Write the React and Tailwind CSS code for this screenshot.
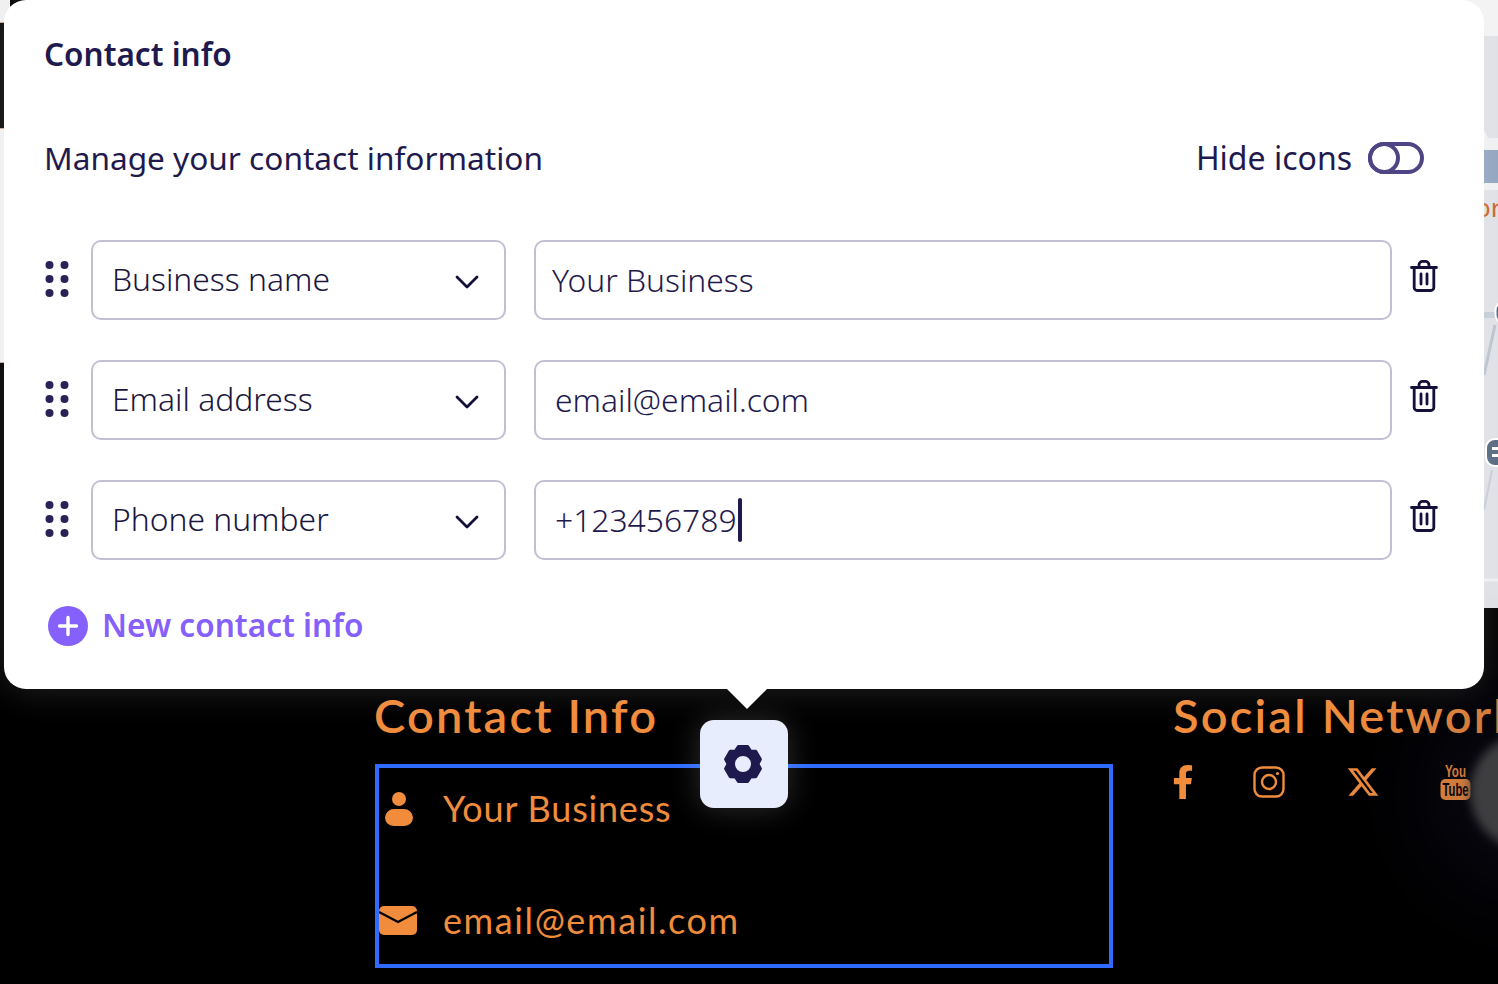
import { Fragment } from "react";
import { FaFacebookF } from "react-icons/fa";
import { FaXTwitter } from "react-icons/fa6";

const rows = [
  { label: "Business name", value: "Your Business", inset: "pl-[16px]" },
  { label: "Email address", value: "email@email.com", inset: "pl-[19px]" },
  { label: "Phone number", value: "+123456789", inset: "pl-[19px]", caret: true },
];

// six tooth gear, points worked out once
function gearPath() {
  const pts = [];
  for (let i = 0; i < 6; i++) {
    const a = (i * Math.PI) / 3 - Math.PI / 2;
    const at = (d, r) => [20 + r * Math.cos(a + d), 20 + r * Math.sin(a + d)];
    pts.push(at(-0.55, 14.8), at(-0.26, 18), at(0.26, 18), at(0.55, 14.8));
  }
  return "M" + pts.map((p) => p[0].toFixed(2) + " " + p[1].toFixed(2)).join("L") + "Z";
}

export default function App() {
  return (
    <div className="relative flex h-[984px] w-[1498px] flex-col overflow-hidden bg-black font-['Noto_Sans',sans-serif]">
      {/* page behind the popover */}
      <div className="flex h-[608px] shrink-0 justify-between">
        <div className="flex w-[10px] flex-col">
          <div className="h-[22px] bg-[#f0f0f0]" />
          <div className="h-[107px] border-y border-[#c9a998] bg-[#0b0b0b]" />
          <div className="h-[233px] bg-[#f0f0f0]" />
          <div className="h-px bg-[#c9a998]" />
        </div>
        <MapStrip />
      </div>

      {/* footer */}
      <div className="flex pl-[375px] pt-[76px] font-['Lato',sans-serif] text-[#f08c3c]">
        <div className="w-[738px] shrink-0">
          <h2 className="ml-[-1px] text-[47px] leading-[62px] font-semibold tracking-[2.2px]">Contact Info</h2>
          <div className="relative mt-[18px] h-[204px] border-4 border-[#2f6bff]">
            <div className="flex h-[130px] items-start pt-[18px]">
              <PersonIcon />
              <span className="ml-[30px] text-[36px] leading-[44px] tracking-[0.8px]">Your Business</span>
            </div>
            <div className="flex items-center">
              <MailIcon />
              <span className="ml-[26px] text-[36px] leading-[44px] tracking-[1.6px]">email@email.com</span>
            </div>
            <button className="absolute left-1/2 top-[-48px] flex h-[88px] w-[88px] -translate-x-1/2 items-center justify-center rounded-[14px] bg-[#e7edfd] shadow-[0_0_30px_rgba(255,255,255,0.18)]">
              <svg width="40" height="40" viewBox="0 0 40 40" className="ml-[-2px]">
                <path
                  d={gearPath() + "M20 10.500a9.500 9.500 0 1 0 0 19a9.500 9.500 0 1 0 0-19Z"}
                  fill="#1f1a4d"
                  fillRule="evenodd"
                  stroke="#1f1a4d"
                  strokeWidth="3"
                  strokeLinejoin="round"
                />
              </svg>
            </button>
          </div>
        </div>
        <div className="ml-[61px] shrink-0">
          <h2 className="ml-[-1px] whitespace-nowrap text-[47px] leading-[62px] font-semibold tracking-[2.2px]">Social Networks</h2>
          <div className="mt-[17px] flex items-center">
            <FaFacebookF className="ml-[-4px] h-[34px] w-[26px]" />
            <svg width="32" height="32" viewBox="0 0 32 32" className="ml-[57px]" fill="none" stroke="currentColor" strokeWidth="2.4">
              <rect x="1.500" y="1.500" width="29" height="29" rx="7.500" />
              <circle cx="16" cy="16" r="7" />
              <circle cx="24.500" cy="7.500" r="1.600" fill="currentColor" stroke="none" />
            </svg>
            <FaXTwitter className="ml-[61px] h-[34px] w-[34px]" />
            <svg width="31" height="37" viewBox="0 0 31 37" className="ml-[60px]">
              <text x="15.500" y="14" fontSize="16" textAnchor="middle" textLength="21" lengthAdjust="spacingAndGlyphs" fill="currentColor" fontFamily="Liberation Sans" fontWeight="700">You</text>
              <rect x="0.500" y="16" width="30" height="21" rx="5" fill="currentColor" />
              <text x="15.500" y="33" fontSize="18" textAnchor="middle" textLength="26" lengthAdjust="spacingAndGlyphs" fill="#000" fontFamily="Liberation Sans" fontWeight="700">Tube</text>
            </svg>
          </div>
        </div>
      </div>

      {/* chat bubble cut off by the window */}
      <div className="absolute left-[1470px] top-[734px] h-[116px] w-[116px] rounded-full bg-[#3e3e40] blur-[5px] shadow-[0_0_110px_50px_rgba(30,30,70,0.25)]" />

      {/* popover */}
      <div className="absolute left-[4px] top-0 h-[689px] w-[1480px] rounded-[22px] bg-white pl-[41px] pt-[31px] text-[#1f1a4d] shadow-[0_0_36px_rgba(255,255,255,0.14)]">
        <h1 className="ml-[-1px] text-[31.500px] leading-[46px] font-semibold">Contact info</h1>
        <div className="mt-[58px] flex h-[46px] items-center justify-between pr-[60px]">
          <span className="ml-[-1px] text-[31.600px] leading-[46px]">Manage your contact information</span>
          <div className="flex items-center gap-[16px]">
            <span className="text-[32px] leading-[46px]">Hide icons</span>
            <span className="relative h-[32px] w-[56px] rounded-full border-4 border-[#4f4584]">
              <span className="absolute left-[-4px] top-[-4px] h-[32px] w-[32px] rounded-full border-4 border-[#4f4584]" />
            </span>
          </div>
        </div>

        <div className="mt-[59px] flex flex-col gap-[40px]">
          {rows.map((r) => (
            <div key={r.label} className="flex h-[80px] items-center">
              <svg width="24" height="36" viewBox="0 0 24 36" className="mt-[-3px] shrink-0" fill="#2a2157">
                {[4, 18, 32].map((y) => (
                  <Fragment key={y}>
                    <circle cx="4.500" cy={y} r="4" />
                    <circle cx="19.500" cy={y} r="4" />
                  </Fragment>
                ))}
              </svg>
              <div className="ml-[22px] flex h-[80px] w-[415px] shrink-0 items-center justify-between rounded-[10px] border-2 border-[#c1c0d2] pl-[19px] pr-[25px] text-[31.800px] font-light text-[#1a1640]">
                <span className="mt-[-2px]">{r.label}</span>
                <svg width="24" height="14" viewBox="0 0 24 14" className="mt-[3px]" fill="none" stroke="#14103c" strokeWidth="2.800" strokeLinecap="round" strokeLinejoin="round">
                  <path d="M2 2l10 10L22 2" />
                </svg>
              </div>
              <div className={`ml-[28px] flex h-[80px] w-[858px] shrink-0 items-center rounded-[10px] border-2 border-[#c1c0d2] text-[31.800px] font-light ${r.inset}`}>
                {r.value}
                {r.caret && <span className="ml-[1px] h-[44px] w-[4px] rounded-full bg-[#1f1a4d]" />}
              </div>
              <svg width="28" height="32" viewBox="0 0 28 32" className="ml-[18px] mt-[-8px] shrink-0" fill="none" stroke="#14103c" strokeWidth="2.800" strokeLinecap="round" strokeLinejoin="round">
                <path d="M1.500 7.500h25M9 7V5a3.600 3.600 0 0 1 3.600-3.600h2.800A3.600 3.600 0 0 1 19 5v2M4.200 8v19.500a3 3 0 0 0 3 3h13.600a3 3 0 0 0 3-3V8M11 14v10M17 14v10" />
              </svg>
            </div>
          ))}
        </div>

        <div className="ml-[3px] mt-[46px] flex items-center gap-[14px]">
          <svg width="40" height="40" viewBox="0 0 40 40" className="shrink-0">
            <circle cx="20" cy="20" r="20" fill="#8560fb" />
            <path d="M20 11.500v17M11.500 20h17" stroke="#fff" strokeWidth="3.400" strokeLinecap="round" />
          </svg>
          <span className="mt-[-2px] text-[31.600px] leading-[40px] font-semibold text-[#8560fb]">New contact info</span>
        </div>

        {/* arrow pointing at the gear */}
        <div className="absolute left-[723px] top-[689px] h-0 w-0 border-x-[20px] border-t-[20px] border-x-transparent border-t-white" />
      </div>
    </div>
  );
}

function PersonIcon() {
  return (
    <svg width="28" height="34" viewBox="0 0 28 34" className="ml-[6px] mt-[6px] shrink-0" fill="currentColor">
      <circle cx="14" cy="7" r="7" />
      <path d="M9 17h10a9 9 0 0 1 9 8.500a8.500 8.500 0 0 1-8.500 8.500h-11A8.500 8.500 0 0 1 0 25.500A9 9 0 0 1 9 17Z" />
    </svg>
  );
}

function MailIcon() {
  return (
    <svg width="38" height="29" viewBox="0 0 38 29" className="shrink-0">
      <rect width="38" height="29" rx="5" fill="currentColor" />
      <path d="M0 6l19 10L38 6" fill="none" stroke="#000" strokeWidth="2.400" />
    </svg>
  );
}

function MapStrip() {
  return (
    <svg width="40" height="608" viewBox="0 0 40 608" className="shrink-0">
      <rect width="40" height="608" fill="#dfe1e6" />
      <rect width="40" height="36" fill="#f3f3f3" />
      <path d="M0 130h26l4 8h10v12H0Z" fill="#eef0f2" />
      <rect y="150" width="40" height="33" fill="#93a5bf" />
      <rect y="183" width="40" height="7" fill="#eef0f2" />
      <path d="M0 312h40v6H0Z" fill="#c5cdd8" />
      <path d="M26 375L37 325" stroke="#bcc3cf" strokeWidth="3" fill="none" />
      <path d="M26 510L34 470" stroke="#c8cdd6" strokeWidth="2" fill="none" />
      <path d="M0 580h40" stroke="#eef0f2" strokeWidth="3" />
      <text x="17" y="217" fontSize="26" fill="#c8672a" fontFamily="Noto Sans">or</text>
      <rect x="37.500" y="302" width="20" height="21" rx="8" fill="#566a80" stroke="#fff" strokeWidth="2" />
      <rect x="28" y="439" width="24" height="27" rx="9" fill="#566a80" stroke="#fff" strokeWidth="2" />
      <rect x="34" y="447" width="6" height="3" fill="#fff" />
      <rect x="34" y="454" width="6" height="3" fill="#fff" />
    </svg>
  );
}
